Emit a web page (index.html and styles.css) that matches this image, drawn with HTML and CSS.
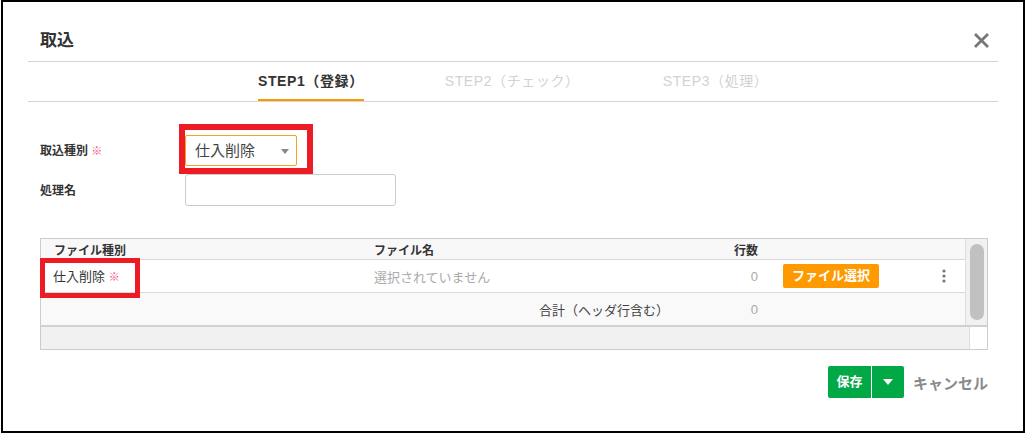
FILE: index.html
```html
<!DOCTYPE html>
<html lang="ja">
<head>
  <meta charset="UTF-8">
  <title>取込</title>
  <link rel="stylesheet" href="styles.css">
</head>
<body>
  <div class="dialog">
    <!-- Header -->
    <div class="dialog-header">
      <h1 class="dialog-title">取込</h1>
      <span class="close-btn">
        <svg width="15" height="15" viewBox="0 0 15 15"><path d="M2 2 L13 13 M13 2 L2 13" stroke="#777" stroke-width="2.8" stroke-linecap="square"/></svg>
      </span>
    </div>

    <!-- Steps -->
    <div class="steps">
      <div class="step active">STEP1（登録）</div>
      <div class="step">STEP2（チェック）</div>
      <div class="step last">STEP3（処理）</div>
    </div>

    <!-- Form -->
    <div class="form">
      <div class="form-row">
        <label class="form-label">取込種別 <span class="req">※</span></label>
        <div class="select">仕入削除<span class="caret"></span></div>
      </div>
      <div class="form-row">
        <label class="form-label">処理名</label>
        <div class="text-input"></div>
      </div>
    </div>

    <!-- File table -->
    <div class="file-table">
      <div class="table-main">
        <div class="table-body">
          <div class="row head">
            <div class="cell">ファイル種別</div>
            <div class="cell">ファイル名</div>
            <div class="cell num">行数</div>
            <div class="cell"></div>
            <div class="cell"></div>
          </div>
          <div class="row data">
            <div class="cell type">仕入削除 <span class="req">※</span></div>
            <div class="cell muted">選択されていません</div>
            <div class="cell num muted">0</div>
            <div class="cell"><span class="file-btn">ファイル選択</span></div>
            <div class="cell kebab">
              <svg width="4" height="14" viewBox="0 0 4 14"><circle cx="2" cy="2" r="1.6" fill="#777"/><circle cx="2" cy="7" r="1.6" fill="#777"/><circle cx="2" cy="12" r="1.6" fill="#777"/></svg>
            </div>
          </div>
          <div class="row total">
            <div class="cell"></div>
            <div class="cell sum-label">合計（ヘッダ行含む）</div>
            <div class="cell num muted">0</div>
            <div class="cell"></div>
            <div class="cell"></div>
          </div>
        </div>
        <div class="vscroll"><div class="vthumb"></div></div>
      </div>
      <div class="hscroll">
        <div class="hscroll-track"></div>
        <div class="hscroll-corner"></div>
      </div>
    </div>

    <!-- Footer -->
    <div class="dialog-footer">
      <div class="split-btn">
        <span class="split-main">保存</span>
        <span class="split-arrow"><span class="caret white"></span></span>
      </div>
      <span class="cancel">キャンセル</span>
    </div>

    <!-- annotation boxes -->
    <div class="mark mark-select"></div>
    <div class="mark mark-type"></div>
  </div>
</body>
</html>
```

FILE: styles.css
```css
body {
  margin: 0;
  background: #fff;
  font-family: "Liberation Sans", "Noto Sans CJK JP", sans-serif;
  color: #333;
}

.dialog {
  position: relative;
  box-sizing: border-box;
  width: 1024px;
  height: 433px;
  margin-left: 1px;
  border: 2px solid #000;
  background: #fff;
}

/* Header */
.dialog-header {
  box-sizing: border-box;
  height: 59px;
  padding: 18px 34px 0 37px;
  display: flex;
  align-items: center;
  justify-content: space-between;
}

.dialog-title {
  margin: 0;
  font-size: 17px;
  font-weight: bold;
  line-height: 20px;
  color: #333;
}

.close-btn {
  display: flex;
  width: 15px;
  height: 15px;
  margin-top: -1px;
}

/* Steps */
.steps {
  box-sizing: border-box;
  height: 41px;
  margin: 0 25px;
  padding-left: 230px;
  border-top: 1px solid #d4d4d4;
  border-bottom: 1px solid #d4d4d4;
  display: flex;
  gap: 81px;
}

.step {
  box-sizing: border-box;
  height: 39px;
  padding-top: 9px;
  font-size: 14px;
  line-height: 20px;
  letter-spacing: 0.6px;
  color: #d2d2d2;
  border-bottom: 2px solid transparent;
}

.step.last {
  margin-left: 2px;
}

.step.active {
  color: #333;
  font-weight: bold;
  border-bottom-color: #ff9900;
}

/* Form */
.form {
  padding: 0 37px;
  margin-top: 33px;
  display: flex;
  flex-direction: column;
  gap: 8px;
}

.form-row {
  display: flex;
  align-items: center;
}

.form-label {
  width: 145px;
  margin-top: -2px;
  font-size: 12px;
  font-weight: bold;
  color: #333;
}

.req {
  color: #f0507a;
  font-size: 11px;
  font-weight: normal;
}

.select {
  box-sizing: border-box;
  position: relative;
  width: 112px;
  height: 31px;
  padding-left: 9px;
  border: 1px solid #f5a31a;
  border-radius: 2px;
  font-size: 15px;
  line-height: 29px;
  color: #444;
}

.caret {
  display: inline-block;
  width: 0;
  height: 0;
  border-left: 4px solid transparent;
  border-right: 4px solid transparent;
  border-top: 5px solid #888;
}

.select .caret {
  position: absolute;
  right: 7px;
  top: 13px;
}

.caret.white {
  border-left-width: 5px;
  border-right-width: 5px;
  border-top: 6px solid #fff;
}

.text-input {
  box-sizing: border-box;
  width: 211px;
  height: 32px;
  border: 1px solid #ccc;
  border-radius: 3px;
}

/* File table */
.file-table {
  box-sizing: border-box;
  width: 948px;
  margin: 32px 0 0 37px;
  border: 1px solid #ccc;
}

.table-main {
  display: flex;
  border-bottom: 2px solid #d0d0d0;
}

.table-body {
  flex: 1;
}

.row {
  display: grid;
  grid-template-columns: 320px 339px 71px 150px 44px;
  align-items: center;
}

.row.head {
  height: 20px;
  background: #f8f8f8;
  border-bottom: 1px solid #d8d8d8;
  font-size: 12px;
  font-weight: bold;
}

.row.data {
  height: 32px;
  border-bottom: 1px solid #d8d8d8;
  font-size: 13px;
}

.row.total {
  height: 32px;
  background: #f9f9f9;
  font-size: 13px;
}

.cell {
  padding: 0 13px;
  white-space: nowrap;
}

.cell.type {
  padding-left: 12px;
  margin-top: -2px;
}

.cell.num {
  text-align: right;
}

.muted {
  color: #aaa;
}

.sum-label {
  text-align: right;
  padding-right: 31px;
  color: #444;
}

.file-btn {
  display: inline-block;
  width: 96px;
  height: 24px;
  margin-left: -1px;
  background: #ff9900;
  border-radius: 2px;
  color: #fff;
  font-weight: bold;
  font-size: 13px;
  line-height: 24px;
  text-align: center;
}

.kebab {
  display: flex;
  justify-content: center;
  padding: 0 0 0 1px;
}

.vscroll {
  box-sizing: border-box;
  width: 22px;
  padding: 5px 3px 4px 4px;
  background: #f1f1f1;
  border-left: 1px solid #ddd;
}

.vthumb {
  height: 76px;
  background: #c1c1c1;
  border-radius: 7px;
}

.hscroll {
  display: flex;
  height: 22px;
}

.hscroll-track {
  flex: 1;
  background: #f1f1f1;
  border-right: 1px solid #ddd;
}

.hscroll-corner {
  width: 17px;
  background: #fff;
}

/* Footer */
.dialog-footer {
  display: flex;
  justify-content: flex-end;
  align-items: center;
  padding-right: 35px;
  margin-top: 16px;
}

.split-btn {
  display: flex;
  height: 32px;
  border-radius: 2px;
  overflow: hidden;
}

.split-main {
  width: 43px;
  background: #00a946;
  color: #fff;
  font-size: 13px;
  font-weight: bold;
  line-height: 32px;
  text-align: center;
}

.split-arrow {
  width: 32px;
  margin-left: 1px;
  background: #00a946;
  display: flex;
  align-items: center;
  justify-content: center;
}

.cancel {
  margin-left: 9px;
  font-size: 15px;
  font-weight: bold;
  color: #8a8a8a;
}

/* red annotation frames */
.mark {
  position: absolute;
  box-sizing: border-box;
  border: 6px solid #ed1c24;
}

.mark-select {
  left: 176px;
  top: 122px;
  width: 134px;
  height: 50px;
}

.mark-type {
  left: 37px;
  top: 256px;
  width: 100px;
  height: 40px;
  border-width: 5px;
}
```
